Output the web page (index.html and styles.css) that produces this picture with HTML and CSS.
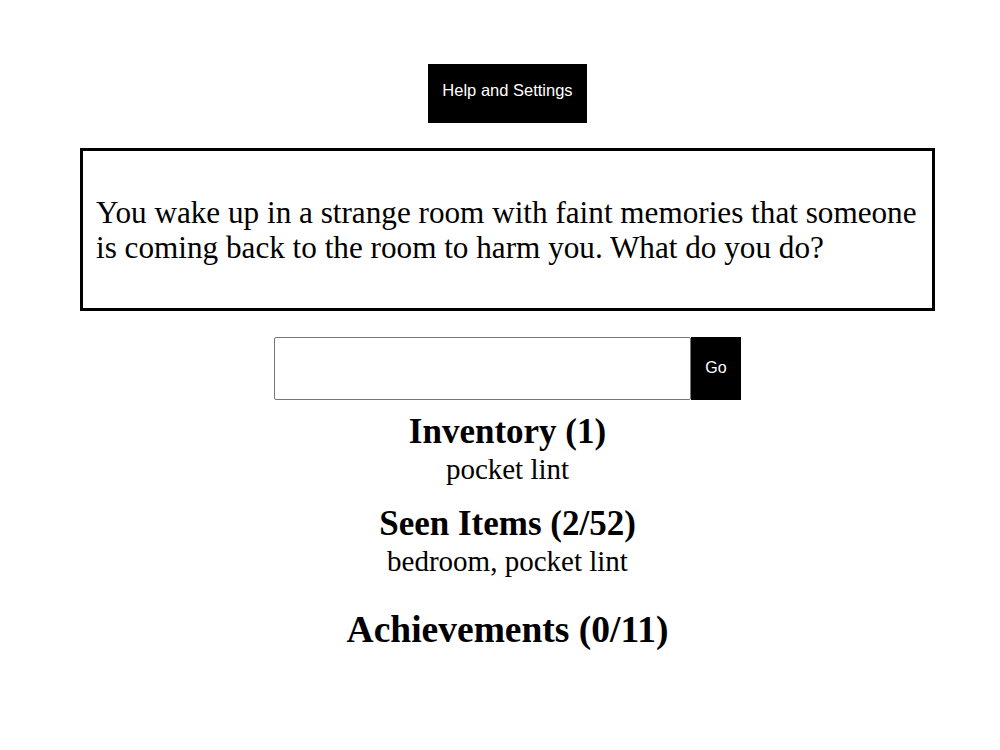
FILE: index.html
```html
<!DOCTYPE html>
<html>
<head>
<meta charset="utf-8">
<link rel="stylesheet" href="styles.css">
</head>
<body>
<div class="page">
  <div class="top">
    <button class="help-btn">Help and Settings</button>
  </div>
  <div class="story">
    <p>You wake up in a strange room with faint memories that someone is coming back to the room to harm you. What do you do?</p>
  </div>
  <div class="command">
    <input class="cmd-input" type="text">
    <button class="go-btn">Go</button>
  </div>
  <section class="panel">
    <h2 class="panel-title">Inventory (1)</h2>
    <div class="panel-list">pocket lint</div>
  </section>
  <section class="panel">
    <h2 class="panel-title">Seen Items (2/52)</h2>
    <div class="panel-list">bedroom, pocket lint</div>
  </section>
  <section class="panel">
    <h1 class="panel-title big">Achievements (0/11)</h1>
  </section>
</div>
</body>
</html>
```
FILE: styles.css
```css
html, body {
  margin: 0;
  padding: 0;
  background: #fff;
}
body {
  font-family: "Liberation Serif", "Times New Roman", serif;
  color: #000;
}
.page {
  padding: 64px 0 0 15px;
  display: flex;
  flex-direction: column;
  align-items: center;
}
.top {
  display: flex;
  justify-content: center;
}
.help-btn {
  box-sizing: border-box;
  background: #000;
  color: #fff;
  border: none;
  font-family: "Liberation Sans", Arial, sans-serif;
  font-size: 16.5px;
  width: 159px;
  height: 59px;
  padding: 0 0 6px 0;
}
.story {
  box-sizing: border-box;
  align-self: stretch;
  margin: 25px 65px 0 65px;
  border: 3px solid #000;
  height: 163px;
  padding: 0 13px;
  display: flex;
  align-items: center;
}
.story p {
  margin: 0;
  font-size: 31.2px;
  line-height: 35px;
}
.command {
  margin-top: 26px;
  display: flex;
}
.cmd-input {
  box-sizing: border-box;
  width: 417px;
  height: 63px;
  border: 1px solid #767676;
  border-radius: 2px;
  margin: 0;
  padding: 0 4px;
  font-size: 20px;
}
.go-btn {
  box-sizing: border-box;
  width: 50px;
  height: 63px;
  background: #000;
  color: #fff;
  border: none;
  padding: 0 0 2px 0;
  font-family: "Liberation Sans", Arial, sans-serif;
  font-size: 16px;
}
.panel {
  text-align: center;
}
.panel-title {
  margin: 0;
  font-size: 35px;
  line-height: 36px;
}
.panel-list {
  font-size: 29px;
  line-height: 38px;
}
.panel:nth-of-type(1) { margin-top: 14px; }
.panel:nth-of-type(2) { margin-top: 18px; }
.panel:nth-of-type(3) { margin-top: 29px; }
.panel-title.big {
  font-size: 37.5px;
  line-height: 42px;
}
```
